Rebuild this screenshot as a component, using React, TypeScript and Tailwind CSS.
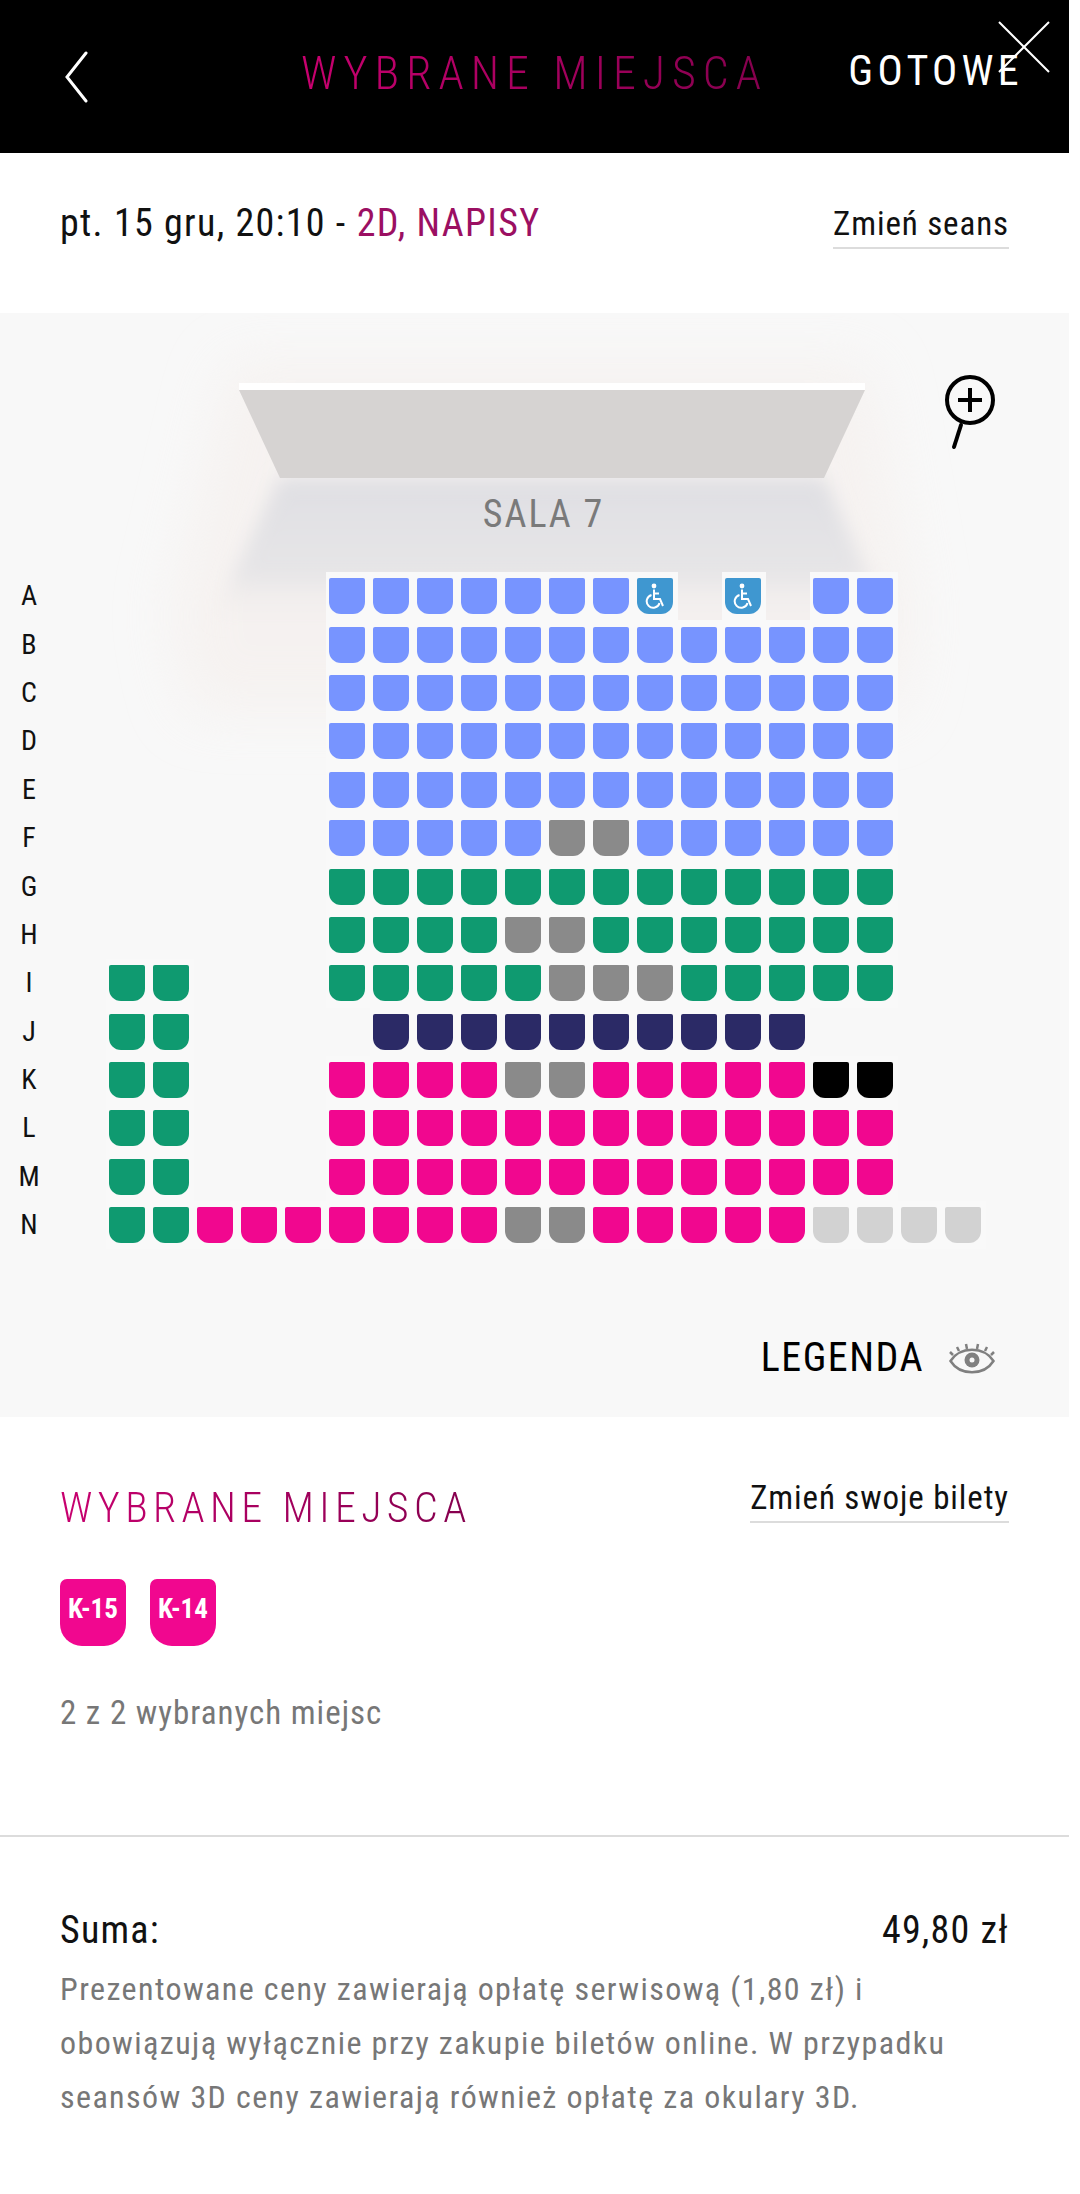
type SeatKind = "blue" | "green" | "navy" | "pink" | "grey" | "black" | "free" | "wheel" | null

const seatColors: Record<string, string> = {
    blue: "bg-[#7794ff]",
    green: "bg-[#0f9a70]",
    navy: "bg-[#2b2a66]",
    pink: "bg-[#f1078f]",
    grey: "bg-[#8a8a8a]",
    black: "bg-black",
    free: "bg-[#d2d2d2]",
    wheel: "bg-[#3f97d0]",
}

// codes: . empty, b blue, g green, n navy, p pink, x grey, k black, f free, w wheelchair
const rows: [string, string][] = [
    ["A", ".....bbbbbbbw.w.bb.."],
    ["B", ".....bbbbbbbbbbbbb.."],
    ["C", ".....bbbbbbbbbbbbb.."],
    ["D", ".....bbbbbbbbbbbbb.."],
    ["E", ".....bbbbbbbbbbbbb.."],
    ["F", ".....bbbbbxxbbbbbb.."],
    ["G", ".....ggggggggggggg.."],
    ["H", ".....ggggxxggggggg.."],
    ["I", "gg...gggggxxxggggg.."],
    ["J", "gg....nnnnnnnnnn...."],
    ["K", "gg...ppppxxpppppkk.."],
    ["L", "gg...ppppppppppppp.."],
    ["M", "gg...ppppppppppppp.."],
    ["N", "ggpppppppxxpppppffff"],
]

const codeToKind: Record<string, SeatKind> = {
    ".": null, b: "blue", g: "green", n: "navy", p: "pink", x: "grey", k: "black", f: "free", w: "wheel",
}

const WheelchairIcon = () => <svg width="20" height="26" viewBox="0 0 20 26" fill="none" stroke="#fff" strokeWidth="2">
    <circle cx="9" cy="3" r="2.4" fill="#fff" stroke="none" />
    <path d="M9 6.5 V16 H15 L18 23" />
    <path d="M9 10.5 H14" />
    <path d="M6.5 12 A6.5 6.5 0 1 0 14.5 20" />
</svg>

const Seat = ({ kind }: { kind: SeatKind }) => {
    if (!kind) return <div className="w-[44px] h-full" />
    return <div className="w-[44px] h-full flex items-center pl-[3px] bg-[#f9f9f9]">
        <div className={`w-[36px] h-[36px] rounded-t-[2px] rounded-b-[12px] flex items-center justify-center text-white ${seatColors[kind]}`}>
            {kind === "wheel" && <WheelchairIcon />}
        </div>
    </div>
}

const Link = ({ text }: { text: string }) => <div className="text-[33px] leading-[36px] tracking-[0.9px] pb-[5px] border-b-2 border-[#dcdcdc] text-[#111] [font-stretch:75%]">{text}</div>

const Title = ({ className }: { className: string }) => <div className={`bg-gradient-to-r from-[#c8006f] to-[#85004e] bg-clip-text text-transparent font-[350] [font-stretch:75%] ${className}`}>WYBRANE MIEJSCA</div>

const App = () => {
    return <div className="w-[1080px] h-[2194px] bg-white relative overflow-hidden font-['Roboto',sans-serif]">
        <div className="w-[1069px]">

            {/* Header */}
            <div className="h-[153px] bg-black relative flex items-start pt-[40px] pl-[65px]">
                <svg width="24" height="52" viewBox="0 0 24 52" fill="none" stroke="#fff" strokeWidth="3" strokeLinecap="round" className="mt-[11px] shrink-0">
                    <path d="M21 2 L2 26 L21 50" />
                </svg>
                <Title className="ml-[212px] mt-[6px] text-[46px] leading-[54px] tracking-[7px]" />
                <div className="ml-auto mr-[46px] mt-[6px] text-white font-normal text-[42px] leading-[50px] tracking-[4.3px] [font-stretch:75%]">GOTOWE</div>
            </div>

            {/* Seans */}
            <div className="h-[160px] flex justify-between items-start px-[60px] pt-[47px]">
                <div className="text-[38px] leading-[46px] tracking-[1.3px] text-[#111] [font-stretch:75%]">pt. 15 gru, 20:10 - <span className="text-[#9b0f62]">2D, NAPISY</span></div>
                <div className="mt-[6px]"><Link text="Zmień seans" /></div>
            </div>

            {/* Hall */}
            <div className="h-[1104px] bg-[#f8f8f8] relative overflow-hidden">

                {/* Screen with its glow and the light on the floor */}
                <svg width="870" height="480" viewBox="0 0 870 480" fill="none" className="absolute left-[100px] top-0">
                    <defs>
                        <linearGradient id="floor" x1="0" y1="0" x2="0" y2="1">
                            <stop offset="0" stopColor="#dfdfe3" />
                            <stop offset="0.65" stopColor="#e6e5e7" />
                            <stop offset="1" stopColor="#f4efec" stopOpacity="0" />
                        </linearGradient>
                        <filter id="soft" x="-20%" y="-20%" width="140%" height="140%">
                            <feGaussianBlur stdDeviation="9" />
                        </filter>
                        <filter id="halo" x="-20%" y="-20%" width="140%" height="140%">
                            <feGaussianBlur stdDeviation="28" />
                        </filter>
                    </defs>
                    <path d="M130 50 H770 L815 300 L800 400 H90 L70 300 Z" fill="#f4eeeb" opacity="0.6" filter="url(#halo)" />
                    <path d="M180 165 H724 L790 310 H110 Z" fill="url(#floor)" filter="url(#soft)" />
                    <path d="M139 77 H765 L724 165 H180 Z" fill="#d6d3d2" />
                    <rect x="139" y="70" width="626" height="7" fill="#ffffff" />
                </svg>

                <svg width="60" height="80" viewBox="0 0 60 80" fill="none" className="absolute left-[940px] top-[60px] text-black">
                    <circle cx="30" cy="27" r="23" stroke="currentColor" strokeWidth="4" />
                    <path d="M30 15 V39 M18 27 H42" stroke="currentColor" strokeWidth="4" />
                    <path d="M21 52 L14 74" stroke="currentColor" strokeWidth="4" strokeLinecap="round" />
                </svg>

                <div className="relative pt-[179px] text-center text-[38px] leading-[45px] tracking-[2px] text-[#7a7a7a] [font-stretch:75%] pl-[18px]">SALA 7</div>

                <div className="relative mt-[35px]">
                    {rows.map(([label, seats]) => <div key={label} className="flex h-[48.4px]">
                        <div className="w-[58px] mr-[48px] self-center text-center text-[28px] leading-[32px] text-[#111] [font-stretch:75%]">{label}</div>
                        {seats.split("").map((code, index) => <Seat key={index} kind={codeToKind[code]} />)}
                    </div>)}
                </div>

                <div className="relative flex justify-end items-center mt-[85px] pr-[74px] gap-[25px]">
                    <div className="text-[40px] leading-[48px] tracking-[1.5px] text-black [font-stretch:75%]">LEGENDA</div>
                    <svg width="46" height="31" viewBox="0 0 46 31" fill="none" stroke="#808080">
                        <path d="M1.5 18 C11 3 35 3 44.5 18 C35 33 11 33 1.5 18 Z" strokeWidth="2.5" />
                        <circle cx="23" cy="17" r="7.5" fill="#808080" stroke="none" />
                        <circle cx="23" cy="17" r="2.5" fill="#f8f8f8" stroke="none" />
                        <path d="M4 12 L1 9 M10 8 L8 4 M18 6 L17 1 M28 6 L29 1 M36 8 L38 4 M42 12 L45 9" strokeWidth="2.5" />
                    </svg>
                </div>
            </div>

            {/* Selected seats */}
            <div className="h-[420px] px-[60px] pt-[66px] border-b-2 border-[#dcdcdc]">
                <div className="flex justify-between items-start">
                    <Title className="text-[42px] leading-[50px] tracking-[5.4px]" />
                    <div className="-mt-[3px]"><Link text="Zmień swoje bilety" /></div>
                </div>
                <div className="flex gap-[24px] mt-[46px]">
                    {["K-15", "K-14"].map(seat => <div key={seat} className="w-[66px] h-[67px] pb-[6px] bg-[#f1078f] rounded-t-[7px] rounded-b-[22px] flex items-center justify-center text-white font-bold text-[27px] [font-stretch:75%]">{seat}</div>)}
                </div>
                <div className="mt-[47px] text-[33px] leading-[40px] text-[#777] tracking-[1px] [font-stretch:75%]">2 z 2 wybranych miejsc</div>
            </div>

            {/* Price */}
            <div className="px-[60px] pt-[70px]">
                <div className="flex justify-between text-[38px] leading-[46px] tracking-[1.2px] text-[#111] [font-stretch:75%]">
                    <div>Suma:</div>
                    <div>49,80 zł</div>
                </div>
                <div className="mt-[9px] text-[32px] leading-[54px] tracking-[1.4px] text-[#777] [font-stretch:75%]">
                    Prezentowane ceny zawierają opłatę serwisową (1,80 zł) i<br />
                    obowiązują wyłącznie przy zakupie biletów online. W przypadku<br />
                    seansów 3D ceny zawierają również opłatę za okulary 3D.
                </div>
            </div>
        </div>

        {/* Close button lying over the header */}
        <svg width="52" height="52" viewBox="0 0 52 52" className="absolute left-[998px] top-[21px]" stroke="#fff" strokeWidth="2" fill="none">
            <path d="M1 1 L51 51 M51 1 L1 51" />
        </svg>
    </div>
}

export default App
